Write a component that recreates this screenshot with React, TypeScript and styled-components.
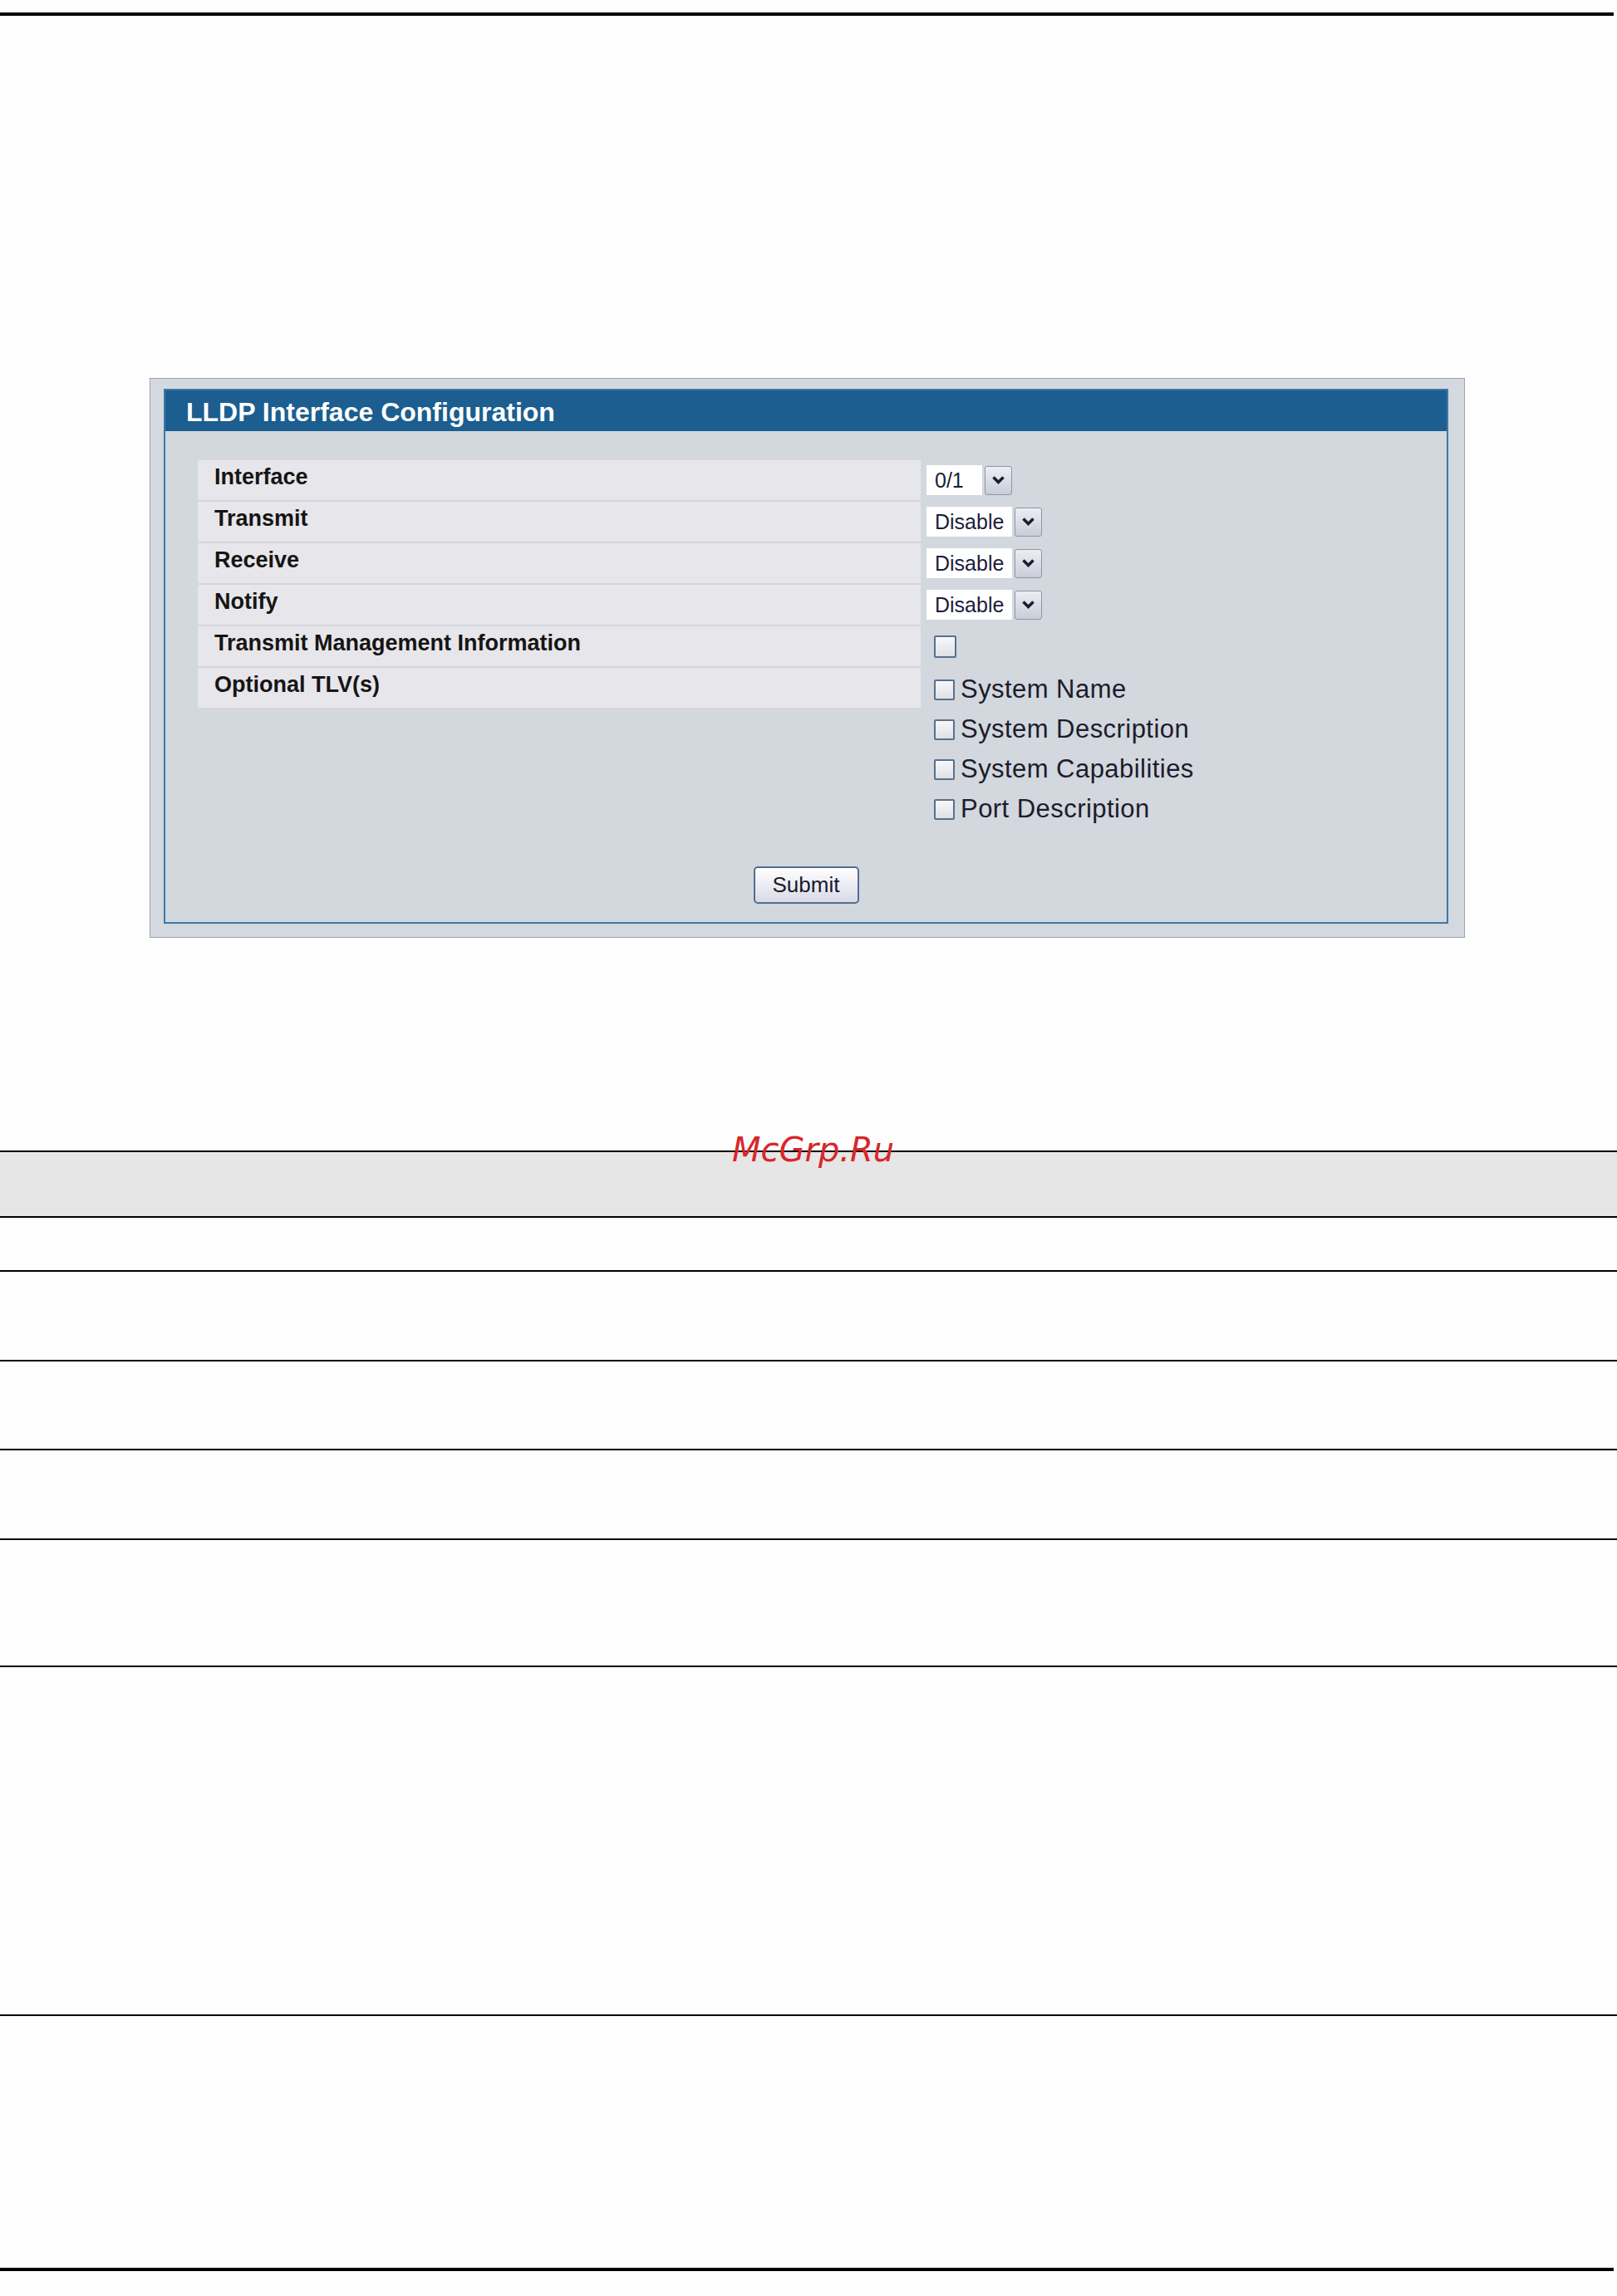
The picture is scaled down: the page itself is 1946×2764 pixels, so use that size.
import React from "react";
import styled, { createGlobalStyle } from "styled-components";

const GlobalStyle = createGlobalStyle`
  html, body {
    margin: 0;
    padding: 0;
    background: #fefefe;
  }
  body {
    font-family: "Liberation Sans", Arial, sans-serif;
  }
`;

const Page = styled.div`
  width: 1946px;
  height: 2764px;
  padding-top: 15px;
  box-sizing: border-box;
`;

const ThickRule = styled.div<{ $top: number }>`
  width: 1942px;
  height: 4px;
  margin-top: ${({ $top }) => $top}px;
  background: #000;
`;

const OuterPanel = styled.div`
  box-sizing: border-box;
  width: 1583px;
  margin: 436px 0 0 180px;
  padding: 12px 19px 16px 16px;
  background: #d4d8df;
  border: 1px solid #9ea4ac;
`;

const InnerPanel = styled.div`
  border: 2px solid #3b78a8;
  background: #d3d7de;
`;

const Header = styled.div`
  box-sizing: border-box;
  height: 49px;
  display: flex;
  align-items: center;
  padding: 4px 0 0 25px;
  background: #1b5e8f;
  color: #fff;
  font-size: 32px;
  font-weight: bold;
`;

const Body = styled.div`
  padding: 35px 39px 22px 39px;
`;

const FormGrid = styled.div`
  display: grid;
  grid-template-columns: 870px 1fr;
  column-gap: 7px;
  row-gap: 2px;
  align-items: start;
`;

const LabelCell = styled.div`
  box-sizing: border-box;
  height: 48px;
  padding: 5px 0 0 20px;
  background: #e7e6ea;
  color: #151515;
  font-size: 27px;
  font-weight: bold;
`;

const ControlCell = styled.div`
  min-height: 48px;
  display: flex;
  align-items: center;
`;

const SelectBox = styled.div`
  display: flex;
  align-items: center;
  gap: 3px;
`;

const SelectField = styled.div<{ $width: number }>`
  box-sizing: border-box;
  width: ${({ $width }) => $width}px;
  height: 36px;
  padding-left: 10px;
  display: flex;
  align-items: center;
  background: #fff;
  color: #1c1c3a;
  font-size: 25px;
`;

const ArrowButton = styled.div`
  box-sizing: border-box;
  width: 33px;
  height: 35px;
  display: flex;
  align-items: center;
  justify-content: center;
  border: 1px solid #8d97a6;
  border-radius: 3px;
  background: linear-gradient(#eceef3, #c9cdd8);
`;

const Check = styled.input.attrs({ type: "checkbox" })<{ $size?: number }>`
  appearance: none;
  box-sizing: border-box;
  width: ${({ $size }) => $size ?? 25}px;
  height: ${({ $size }) => $size ?? 25}px;
  margin: 0 0 0 9px;
  border: 2px solid #55718f;
  border-radius: 2px;
  background: linear-gradient(#f8f8fa, #dfe0e6);
`;

const OptionList = styled.div`
  padding-top: 2px;
  display: flex;
  flex-direction: column;
`;

const OptionItem = styled.label`
  height: 48px;
  display: flex;
  align-items: center;
  gap: 7px;
  color: #1c1c2c;
  font-size: 31px;
  letter-spacing: 0.45px;
`;

const ButtonRow = styled.div`
  display: flex;
  justify-content: center;
  margin-top: 45px;
`;

const SubmitButton = styled.button`
  box-sizing: border-box;
  width: 127px;
  height: 45px;
  padding: 0;
  border: 2px solid #4f6f92;
  border-radius: 5px;
  background: linear-gradient(#ffffff, #d9d9e8);
  color: #1a1a2a;
  font-family: "Liberation Sans", Arial, sans-serif;
  font-size: 26px;
`;

const Table = styled.div`
  position: relative;
  margin-top: 256px;
  border-bottom: 2px solid #000;
`;

const TableRow = styled.div<{ $height: number; $shaded?: boolean }>`
  box-sizing: border-box;
  height: ${({ $height }) => $height}px;
  border-top: 2px solid #000;
  background: ${({ $shaded }) => ($shaded ? "#e6e6e6" : "transparent")};
`;

const Watermark = styled.div`
  position: absolute;
  top: -21px;
  left: 881px;
  color: #d8262a;
  font-family: "DejaVu Sans", sans-serif;
  font-style: italic;
  font-size: 40px;
  line-height: 40px;
  white-space: nowrap;
`;

const Chevron = () => (
  <svg width="17" height="12" viewBox="0 0 17 12">
    <path d="M2.5 2.5 L8.5 8.5 L14.5 2.5" fill="none" stroke="#1c1c2c" strokeWidth="3.5" />
  </svg>
);

const Select = ({ value, width }: { value: string; width: number }) => (
  <SelectBox>
    <SelectField $width={width}>{value}</SelectField>
    <ArrowButton>
      <Chevron />
    </ArrowButton>
  </SelectBox>
);

const tlvs = ["System Name", "System Description", "System Capabilities", "Port Description"];
const tableRows = [65, 108, 107, 108, 153, 420];

export default function App() {
  return (
    <>
      <GlobalStyle />
      <Page>
        <ThickRule $top={0} />
        <OuterPanel>
          <InnerPanel>
            <Header>LLDP Interface Configuration</Header>
            <Body>
              <FormGrid>
                <LabelCell>Interface</LabelCell>
                <ControlCell>
                  <Select value="0/1" width={67} />
                </ControlCell>
                <LabelCell>Transmit</LabelCell>
                <ControlCell>
                  <Select value="Disable" width={103} />
                </ControlCell>
                <LabelCell>Receive</LabelCell>
                <ControlCell>
                  <Select value="Disable" width={103} />
                </ControlCell>
                <LabelCell>Notify</LabelCell>
                <ControlCell>
                  <Select value="Disable" width={103} />
                </ControlCell>
                <LabelCell>Transmit Management Information</LabelCell>
                <ControlCell>
                  <Check $size={27} />
                </ControlCell>
                <LabelCell>Optional TLV(s)</LabelCell>
                <OptionList>
                  {tlvs.map((t) => (
                    <OptionItem key={t}>
                      <Check />
                      {t}
                    </OptionItem>
                  ))}
                </OptionList>
              </FormGrid>
              <ButtonRow>
                <SubmitButton>Submit</SubmitButton>
              </ButtonRow>
            </Body>
          </InnerPanel>
        </OuterPanel>
        <Table>
          <Watermark>McGrp.Ru</Watermark>
          <TableRow $height={79} $shaded />
          {tableRows.map((h, i) => (
            <TableRow key={i} $height={h} />
          ))}
        </Table>
        <ThickRule $top={303} />
      </Page>
    </>
  );
}
